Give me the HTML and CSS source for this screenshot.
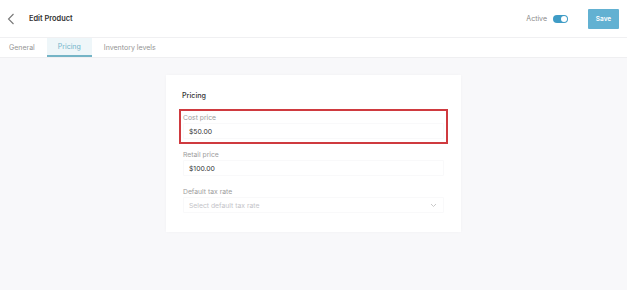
FILE: index.html
```html
<!DOCTYPE html>
<html>
<head>
<meta charset="utf-8">
<link rel="stylesheet" href="styles.css">
</head>
<body>
<header class="topbar">
  <svg class="back" width="8" height="12" viewBox="0 0 8 12"><path d="M6.5 1 L1.5 6 L6.5 11" fill="none" stroke="#777" stroke-width="1.1"/></svg>
  <span class="title">Edit Product</span>
  <span class="spacer"></span>
  <span class="active-label">Active</span>
  <span class="toggle"><span class="knob"></span></span>
  <button class="save">Save</button>
</header>
<nav class="tabs">
  <span class="tab">General</span>
  <span class="tab current">Pricing</span>
  <span class="tab">Inventory levels</span>
</nav>
<main class="content">
  <section class="card">
    <h2 class="card-title">Pricing</h2>
    <div class="fields">
      <div class="field highlight">
        <div class="label">Cost price</div>
        <div class="input">$50.00</div>
      </div>
      <div class="field">
        <div class="label">Retail price</div>
        <div class="input">$100.00</div>
      </div>
      <div class="field">
        <div class="label">Default tax rate</div>
        <div class="input select"><span class="placeholder">Select default tax rate</span>
          <svg width="7" height="5" viewBox="0 0 7 5"><path d="M1 1 L3.5 3.5 L6 1" fill="none" stroke="#bbb" stroke-width="0.8"/></svg>
        </div>
      </div>
    </div>
  </section>
</main>
</body>
</html>
```
FILE: styles.css
```css
* { box-sizing: border-box; }
html, body { margin: 0; padding: 0; height: 100%; }
body {
  font-family: "Inter", "Noto Sans", sans-serif;
  background: #f8f8fa;
  color: #333;
  display: flex;
  flex-direction: column;
}
.topbar {
  height: 38px;
  background: #fff;
  display: flex;
  align-items: center;
  padding: 0 8px 0 7px;
  border-bottom: 1px solid #f0f0f2;
  flex: none;
}
.back { display: block; }
.title {
  margin-left: 14px;
  font-size: 7.4px;
  font-weight: 600;
  color: #333;
}
.spacer { flex: 1; }
.active-label {
  font-size: 7px;
  color: #8a8a8a;
  margin-right: 6px;
}
.toggle {
  width: 15px;
  height: 8px;
  border-radius: 4px;
  background: #3f9cc6;
  position: relative;
  margin-right: 20px;
}
.knob {
  position: absolute;
  right: 1px;
  top: 1px;
  width: 6px;
  height: 6px;
  border-radius: 50%;
  background: #fff;
}
.save {
  width: 31px;
  height: 20px;
  border: none;
  border-radius: 1px;
  background: #62b1d2;
  color: #fff;
  font-family: inherit;
  font-size: 6.5px;
  font-weight: 600;
  padding: 0;
}
.tabs {
  height: 20px;
  background: #fff;
  display: flex;
  align-items: stretch;
  border-bottom: 1px solid #efeff1;
  flex: none;
}
.tab {
  display: flex;
  align-items: center;
  font-size: 7px;
  color: #949494;
  padding: 0 9px;
}
.tab:first-child { margin-right: 3px; }
.tab.current {
  width: 45px;
  justify-content: center;
  padding: 0;
  background: #eef6f9;
  color: #72b4c9;
  border-bottom: 2px solid #74b4c6;
  margin-right: 3px;
}
.content {
  flex: 1;
  background: #f8f8fa;
  padding-top: 17px;
  display: flex;
  justify-content: center;
  align-items: flex-start;
}
.card {
  width: 295px;
  background: #fff;
  padding: 15px 13px 14px;
  box-shadow: 0 0 3px rgba(0,0,0,0.03);
}
.card-title {
  margin: 0 0 7px 3px;
  font-size: 7.2px;
  line-height: 12px;
  font-weight: 500;
  color: #333;
}
.fields {
  display: flex;
  flex-direction: column;
  gap: 2px;
}
.field {
  height: 35px;
  border: 2px solid transparent;
  padding: 2px 2px 3px;
}
.field.highlight { border-color: #cf3a3f; }
.label {
  height: 10px;
  line-height: 10px;
  font-size: 6.8px;
  color: #9c9c9c;
}
.input {
  height: 16px;
  line-height: 15px;
  padding-left: 5px;
  font-size: 6.8px;
  color: #333;
  border: 0.5px solid #f9f9fa;
  border-radius: 1px;
}
.select {
  display: flex;
  align-items: center;
  justify-content: space-between;
  padding-right: 6px;
}
.placeholder { color: #c4c4c8; }
```
